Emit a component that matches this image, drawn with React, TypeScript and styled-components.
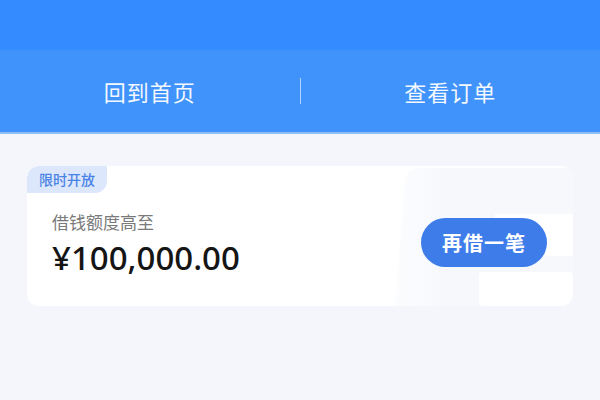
import React from 'react';
import styled, { createGlobalStyle } from 'styled-components';

const GlobalStyle = createGlobalStyle`
  html, body {
    margin: 0;
    padding: 0;
    background: #f4f6fb;
    font-family: "Noto Sans CJK SC", "Noto Sans", sans-serif;
  }
`;

const Page = styled.div`
  width: 600px;
  height: 400px;
  background: #f4f6fb;
  overflow: hidden;
`;

const TopBand = styled.div`
  height: 50px;
  background: #338bff;
`;

const NavBar = styled.div`
  height: 82px;
  background: #3f93fb;
  border-bottom: 2px solid #8cc0f5;
  display: flex;
  align-items: center;
`;

const NavItem = styled.div`
  flex: 1;
  text-align: center;
  color: #f4f8ff;
  font-size: 22px;
  letter-spacing: 1px;
`;

const Divider = styled.div`
  width: 1px;
  height: 26px;
  background: rgba(255, 255, 255, 0.6);
`;

const Content = styled.div`
  padding: 32px 27px 0;
`;

const Card = styled.div`
  position: relative;
  height: 140px;
  background: #ffffff;
  border-radius: 12px;
  overflow: hidden;
  display: flex;
  align-items: center;
  justify-content: space-between;
  padding: 0 26px 0 25px;
  box-sizing: border-box;
`;

const Badge = styled.div`
  position: absolute;
  top: 0;
  left: 0;
  height: 27px;
  padding: 0 12px;
  background: #dce7fb;
  color: #4a83e6;
  font-size: 14px;
  font-weight: 500;
  line-height: 27px;
  border-radius: 12px 0 12px 0;
`;

const Decor = styled.svg`
  position: absolute;
  right: 0;
  top: 0;
`;

const Info = styled.div`
  position: relative;
  display: flex;
  flex-direction: column;
  margin-top: 18px;
`;

const Label = styled.div`
  color: #7a7a7a;
  font-size: 17px;
  line-height: 24px;
`;

const Amount = styled.div`
  color: #151515;
  font-family: "Noto Sans", "Noto Sans CJK SC", sans-serif;
  font-size: 33px;
  font-weight: 500;
  line-height: 44px;
  margin-top: 2px;
`;

const ActionButton = styled.button`
  position: relative;
  width: 126px;
  height: 49px;
  border: none;
  border-radius: 25px;
  background: #3e7ce9;
  color: #ffffff;
  font-family: "Noto Sans CJK SC", sans-serif;
  font-size: 20px;
  font-weight: 700;
  letter-spacing: 1px;
  margin-top: 12px;
`;

export default function App() {
  return (
    <Page>
      <GlobalStyle />
      <TopBand />
      <NavBar>
        <NavItem>回到首页</NavItem>
        <Divider />
        <NavItem>查看订单</NavItem>
      </NavBar>
      <Content>
        <Card>
          <Decor width="190" height="140" viewBox="0 0 190 140">
            <defs>
              <linearGradient id="fade" x1="0" y1="0" x2="1" y2="0">
                <stop offset="0" stopColor="#f7f9fd" stopOpacity="0.4" />
                <stop offset="0.25" stopColor="#f6f8fc" />
                <stop offset="1" stopColor="#f6f8fc" />
              </linearGradient>
            </defs>
            <path d="M22 14 Q24 2 38 2 L190 2 L190 140 L12 140 Z" fill="url(#fade)" />
            <rect x="112" y="48" width="78" height="42" fill="#ffffff" />
            <rect x="96" y="106" width="94" height="34" rx="4" fill="#ffffff" />
          </Decor>
          <Badge>限时开放</Badge>
          <Info>
            <Label>借钱额度高至</Label>
            <Amount>¥100,000.00</Amount>
          </Info>
          <ActionButton>再借一笔</ActionButton>
        </Card>
      </Content>
    </Page>
  );
}
